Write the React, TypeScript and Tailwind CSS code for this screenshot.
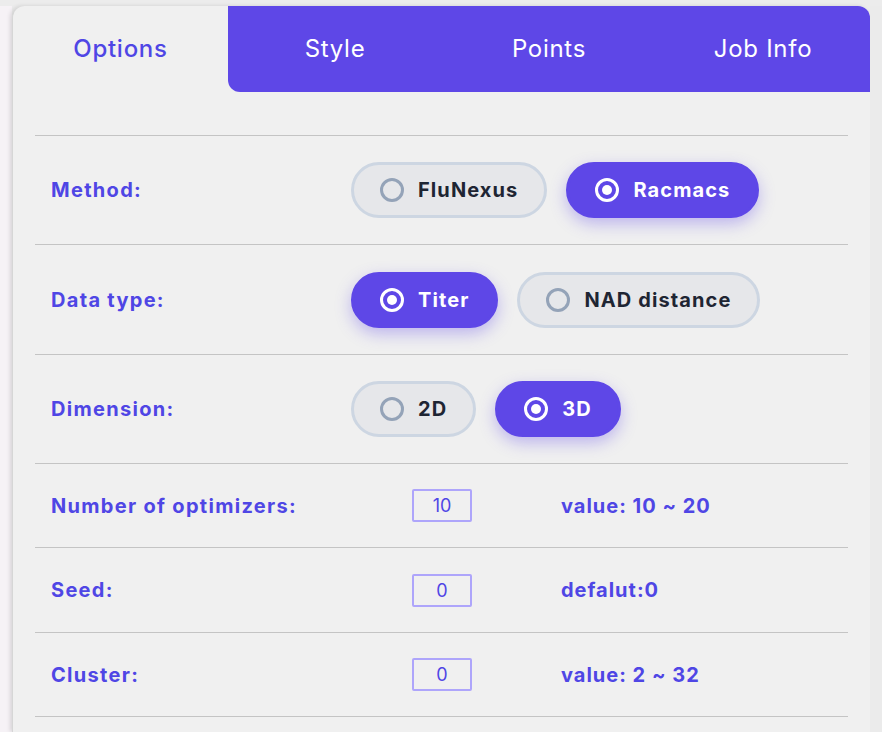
import React from "react";

type Opt = { label: string; active?: boolean };

function RadioPill({ label, active }: Opt) {
  return (
    <div
      className={
        active
          ? "flex h-[56px] items-center gap-[14px] rounded-full border-[3px] border-[#5e47e7] bg-[#5e47e7] px-[26px] text-white shadow-[0_6px_16px_rgba(94,71,231,0.35)]"
          : "flex h-[56px] items-center gap-[14px] rounded-full border-[3px] border-[#cdd6e2] bg-[#e6e7ea] px-[26px] text-[#1e2533]"
      }
    >
      {active ? (
        <span className="flex h-[24px] w-[24px] items-center justify-center rounded-full border-[3px] border-white">
          <span className="h-[10px] w-[10px] rounded-full bg-white" />
        </span>
      ) : (
        <span className="h-[24px] w-[24px] rounded-full border-[3px] border-[#94a3b8]" />
      )}
      <span className="text-[20px] font-bold leading-none tracking-[0.055em]">{label}</span>
    </div>
  );
}

function ChoiceRow({ label, options, h }: { label: string; options: Opt[]; h: string }) {
  return (
    <div className={"flex items-center border-b border-[#c4c4c4] pl-[16px] " + h}>
      <div className="w-[300px] text-[20px] font-bold tracking-[0.065em] text-[#4f46e5]">{label}</div>
      <div className="flex gap-[19px]">
        {options.map((o) => (
          <RadioPill key={o.label} {...o} />
        ))}
      </div>
    </div>
  );
}

function InputRow({ label, value, hint, h }: { label: string; value: string; hint: string; h: string }) {
  return (
    <div className={"flex items-center border-b border-[#c4c4c4] pl-[16px] " + h}>
      <div className="w-[361px] text-[20px] font-bold tracking-[0.065em] text-[#4f46e5]">{label}</div>
      <div className="flex h-[33px] w-[60px] items-center justify-center rounded-[2px] border-2 border-[#aea5fb] text-[18px] text-[#4f46e5]">
        {value}
      </div>
      <div className="ml-[89px] text-[20px] font-bold tracking-[0.05em] text-[#4f46e5]">{hint}</div>
    </div>
  );
}

export default function App() {
  const tabs = ["Options", "Style", "Points", "Job Info"];
  return (
    <div
      className="flex h-[732px] w-[882px] bg-[#ececec] pt-[6px]"
      style={{ fontFamily: "Inter, 'Noto Sans', sans-serif" }}
    >
      <div className="w-[12px] bg-[#f6f2f6]" />
      <div className="flex w-[858px] flex-col rounded-t-[12px] border-l border-[#d6d6d6] bg-[#f0f0f0] shadow-[-2px_0_4px_rgba(0,0,0,0.12)]">
        <div className="flex h-[86px]">
          {tabs.map((t, i) =>
            i === 0 ? (
              <div
                key={t}
                className="flex w-[215px] items-center justify-center rounded-tl-[12px] text-[24px] font-medium tracking-[0.03em] text-[#4f46e5]"
              >
                {t}
              </div>
            ) : (
              <div
                key={t}
                className={
                  "flex flex-1 items-center justify-center bg-[#5e47e7] text-[24px] tracking-[0.03em] text-white " +
                  (i === 1 ? "rounded-bl-[12px]" : i === 3 ? "rounded-tr-[12px]" : "")
                }
              >
                {t}
              </div>
            )
          )}
        </div>
        <div className="mx-[22px] mt-[43px] border-t border-[#c4c4c4]">
          <ChoiceRow
            h="h-[109px]"
            label="Method:"
            options={[{ label: "FluNexus" }, { label: "Racmacs", active: true }]}
          />
          <ChoiceRow
            h="h-[110px]"
            label="Data type:"
            options={[{ label: "Titer", active: true }, { label: "NAD distance" }]}
          />
          <ChoiceRow
            h="h-[109px]"
            label="Dimension:"
            options={[{ label: "2D" }, { label: "3D", active: true }]}
          />
          <InputRow h="h-[84px]" label="Number of optimizers:" value="10" hint="value: 10 ~ 20" />
          <InputRow h="h-[85px]" label="Seed:" value="0" hint="defalut:0" />
          <InputRow h="h-[84px]" label="Cluster:" value="0" hint="value: 2 ~ 32" />
        </div>
      </div>
      <div className="w-[12px] bg-[#ebebeb]" />
    </div>
  );
}
